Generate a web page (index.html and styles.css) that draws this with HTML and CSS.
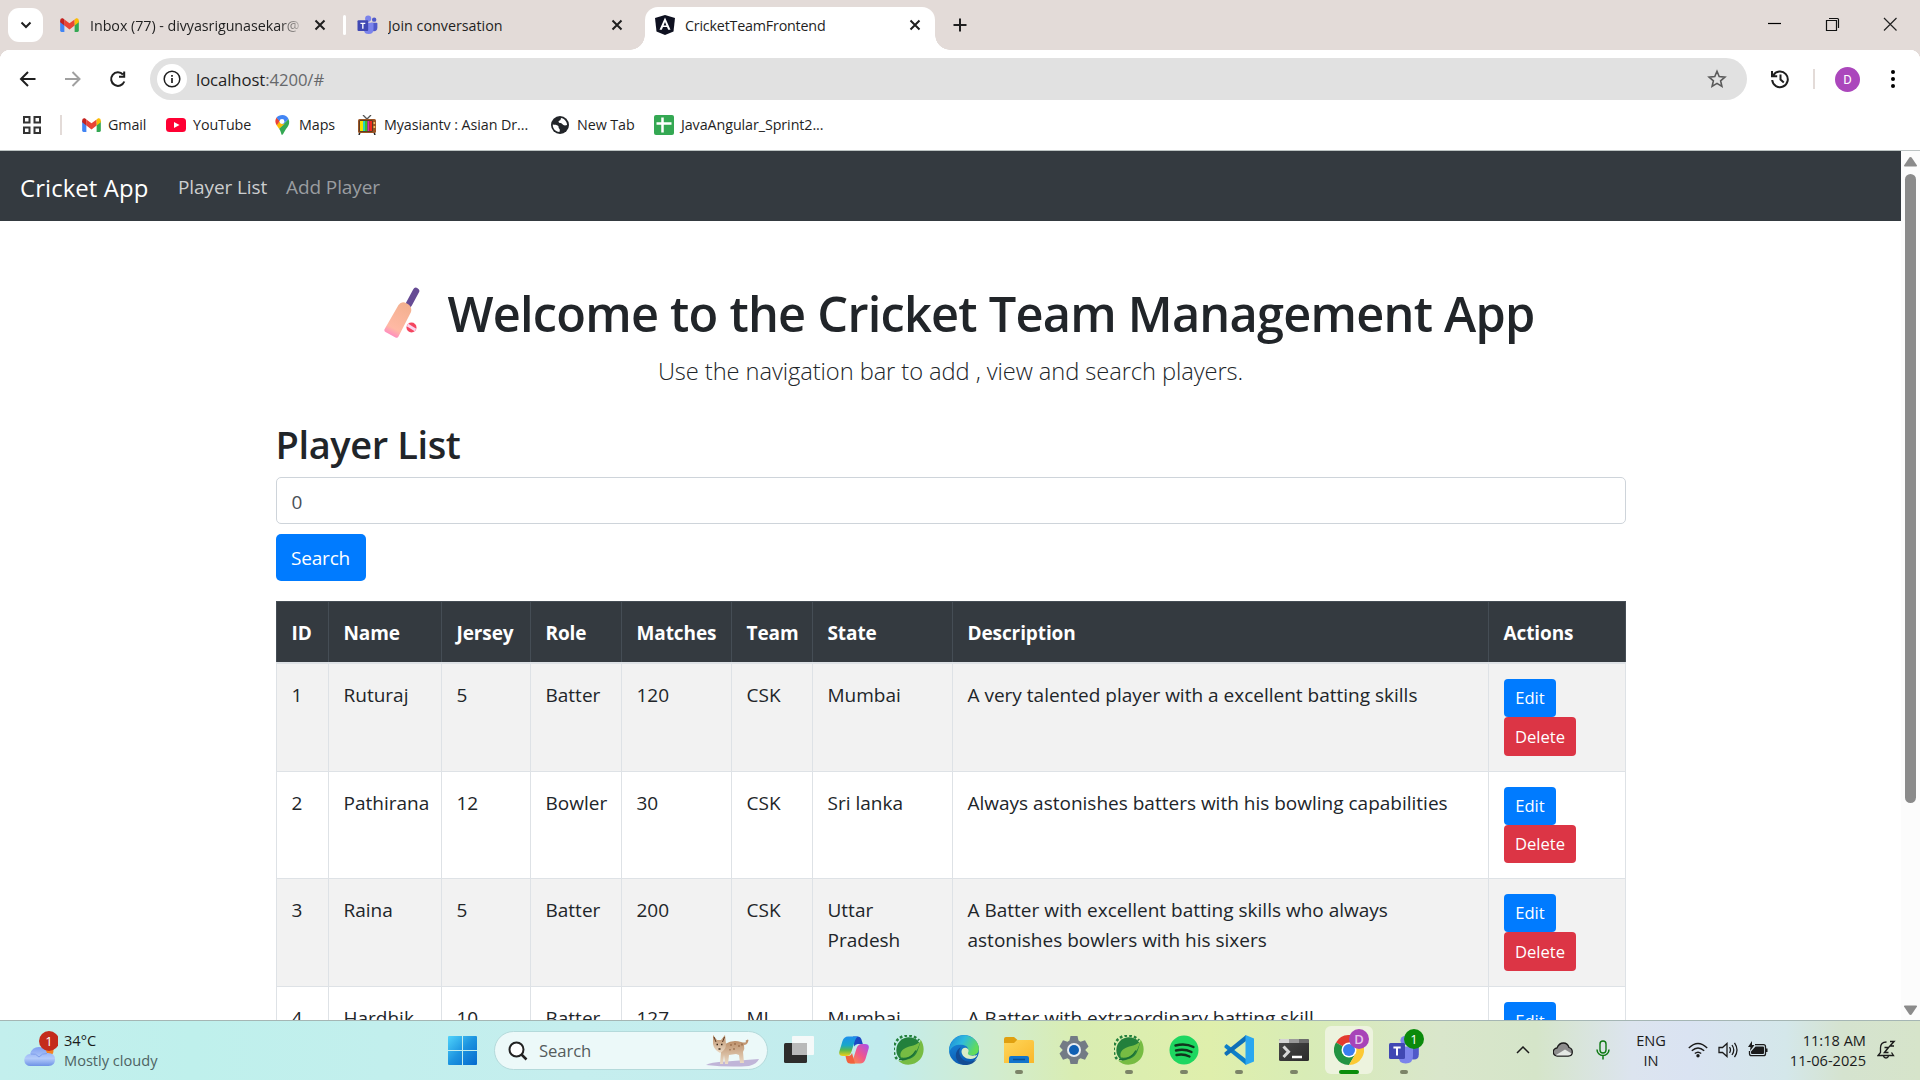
FILE: index.html
```html
<!DOCTYPE html>
<html lang="en">
<head>
<meta charset="utf-8">
<title>CricketTeamFrontend</title>
<link rel="stylesheet" href="styles.css">
</head>
<body>
<svg class="defs" width="0" height="0">
  <defs>
    <linearGradient id="gWin" x1="0" y1="0" x2="1" y2="1"><stop offset="0" stop-color="#4fd3fb"/><stop offset=".5" stop-color="#1c93df"/><stop offset="1" stop-color="#0469ce"/></linearGradient>
    <linearGradient id="gCloud" x1="0" y1="0" x2="0" y2="1"><stop offset="0" stop-color="#7f9ff0"/><stop offset=".6" stop-color="#b3cbfa"/><stop offset="1" stop-color="#6d92e6"/></linearGradient>
    <linearGradient id="gCopA" x1="0" y1="0" x2="0" y2="1"><stop offset="0" stop-color="#1d8fee"/><stop offset=".45" stop-color="#18a7c9"/><stop offset=".7" stop-color="#58b84e"/><stop offset="1" stop-color="#f2cf16"/></linearGradient>
    <linearGradient id="gCopB" x1="1" y1="0" x2="0" y2="1"><stop offset="0" stop-color="#a64ff0"/><stop offset=".5" stop-color="#f0568c"/><stop offset="1" stop-color="#fc9a3a"/></linearGradient>
    <linearGradient id="gEdgeA" x1="0" y1="0" x2="1" y2=".4"><stop offset="0" stop-color="#1b86d8"/><stop offset=".5" stop-color="#2ebadd"/><stop offset="1" stop-color="#62dc5a"/></linearGradient>
    <linearGradient id="gEdgeB" x1="0" y1="0" x2=".3" y2="1"><stop offset="0" stop-color="#1b8fe0"/><stop offset="1" stop-color="#0b5cb4"/></linearGradient>
    <linearGradient id="gFolder" x1="0" y1="0" x2="1" y2="1"><stop offset="0" stop-color="#ffd65a"/><stop offset="1" stop-color="#f9b72a"/></linearGradient>
    <linearGradient id="gTerm" x1="0" y1="0" x2="1" y2="1"><stop offset="0" stop-color="#4a4a4a"/><stop offset="1" stop-color="#2b2b2b"/></linearGradient>
    <linearGradient id="gBat" x1=".7" y1="0" x2=".3" y2="1"><stop offset="0" stop-color="#f3b08f"/><stop offset=".75" stop-color="#ffb9a4"/><stop offset="1" stop-color="#ff84c4"/></linearGradient>
    <linearGradient id="gLynx" x1="0" y1="0" x2="0" y2="1"><stop offset="0" stop-color="#b98a63"/><stop offset="1" stop-color="#ecdcc8"/></linearGradient>

    <symbol id="gmail" viewBox="0 0 20 15"><path fill="#4285f4" d="M0 3v10.500Q0 15 1.400 15H4.500V5z"/><path fill="#34a853" d="M15.500 15h3.100q1.400 0 1.400-1.500V3l-4.500 2z"/><path fill="#ea4335" d="M4.500 8V1.500L10 5.700l5.500-4.200V8L10 12.200z"/><path fill="#fbbc04" d="M15.500 1.500V8L20 4.600V3c0-2.700-2.300-3.300-3.600-2.200z"/><path fill="#c5221f" d="M4.500 1.500V8L0 4.600V3C0 .3 2.300-.3 3.600.8z"/></symbol>
    <symbol id="teams" viewBox="0 0 30 30"><circle cx="16" cy="5.500" r="4.600" fill="#7b83eb"/><circle cx="25" cy="7" r="3.300" fill="#5059c9"/><path fill="#5059c9" d="M20 11.500h8.500q1.300 0 1.300 1.300v6.500q0 5.200-5 5.200-4 0-5-4z"/><path fill="#7b83eb" d="M9.500 11.500h13.300q1.200 0 1.200 1.200v8.500q0 7.300-7.300 7.300-7.200 0-7.200-7.300z"/><rect x="0" y="8" width="16" height="16" rx="1.500" fill="#4048b3"/><path d="M4.400 12.500h7.300M8 12.500v8" stroke="#fff" stroke-width="2" fill="none"/></symbol>
    <symbol id="x" viewBox="0 0 12 12"><path d="M1.500 1.500l9 9M10.500 1.500l-9 9" stroke="#1f1f1f" stroke-width="2" fill="none"/></symbol>
    <symbol id="spring" viewBox="0 0 30 30"><circle cx="15" cy="15" r="12.700" fill="#23803c"/><path d="M3 24A13.700 13.700 0 0 1 25 5.500" fill="none" stroke="#23803c" stroke-width="2.600" stroke-dasharray="2.700 2.100"/><path fill="#77bc43" d="M26.500 4.500C31 11 30.500 19 26 24.500 20 31 10 31.500 4 25.500c5 1 8-.5 12.500-2C23 21 25 13 26.500 4.500z"/><path fill="#77bc43" d="M26 6C23 11 16 10.500 11.500 13c-5 2.500-6 6.500-4.500 9.500C15 23.500 24 19.500 26 6z"/><path d="M5 24.500c8 .5 14-3.500 17-9" stroke="#1b6e35" stroke-width="1.300" fill="none"/></symbol>
  </defs>
</svg>

<header class="tabstrip">
  <button class="tab-menu"><svg width="12" height="8" viewBox="0 0 12 8"><path d="M1.500 1.500L6 6l4.500-4.500" fill="none" stroke="#1f1f1f" stroke-width="2"/></svg></button>
  <div class="tab tab-inbox"><svg width="19" height="14"><use href="#gmail"/></svg><span class="tab-title fade">Inbox (77) - divyasrigunasekar@</span><svg class="close" width="12" height="12"><use href="#x"/></svg></div>
  <i class="tab-sep"></i>
  <div class="tab tab-join"><svg width="21" height="20"><use href="#teams"/></svg><span class="tab-title">Join conversation</span><svg class="close" width="12" height="12"><use href="#x"/></svg></div>
  <div class="tab tab-active"><svg width="20" height="20" viewBox="0 0 20 20"><path fill="#0e1120" d="M10 0l10 3-1.500 13.500L10 20l-8.500-3.500L0 3z"/><path fill="#fff" fill-rule="evenodd" d="M10 2.500l5.500 12.300h-2.300L12 12H8l-1.200 2.800H4.500zM10 7l-1.400 3.400h2.800z"/></svg><span class="tab-title">CricketTeamFrontend</span><svg class="close" width="12" height="12"><use href="#x"/></svg></div>
  <svg class="plus" width="14" height="14" viewBox="0 0 14 14"><path d="M7 .5v13M.5 7h13" stroke="#1f1f1f" stroke-width="2"/></svg>
  <div class="winbtns">
    <svg width="58" height="40" viewBox="0 0 58 40"><path d="M22 20.500h13" stroke="#000" stroke-width="1.200"/></svg>
    <svg width="58" height="40" viewBox="0 0 58 40"><path d="M22.500 17.500h10v10h-10zM25 15.500h8.500q1 0 1 1V25" fill="none" stroke="#111" stroke-width="1.200"/></svg>
    <svg width="58" height="40" viewBox="0 0 58 40"><path d="M22 15l12.500 12.500M34.500 15L22 27.500" fill="none" stroke="#222" stroke-width="1.200"/></svg>
  </div>
</header>

<section class="chrome-bars">
  <div class="toolbar">
    <svg class="nav-ic" width="45" height="30" viewBox="0 0 45 30"><path d="M35.500 15H21M28 8l-7 7 7 7" fill="none" stroke="#1f1f1f" stroke-width="2"/></svg>
    <svg class="nav-ic" width="45" height="30" viewBox="0 0 45 30"><path d="M20 15h14.500M27.500 8l7 7-7 7" fill="none" stroke="#a0a0a0" stroke-width="2"/></svg>
    <svg class="nav-ic" width="45" height="30" viewBox="0 0 45 30"><path d="M34.300 17.500A6.800 6.800 0 1 1 33 10.500M34.200 7.500v5.200h-5.200" fill="none" stroke="#1f1f1f" stroke-width="2"/></svg>
    <div class="omnibox">
      <span class="info"><svg width="18" height="18" viewBox="0 0 18 18"><circle cx="9" cy="9" r="7.800" fill="none" stroke="#1f1f1f" stroke-width="1.500"/><path d="M9 8v5M9 5v1.800" stroke="#1f1f1f" stroke-width="1.700"/></svg></span>
      <span class="url">localhost<span class="port">:4200/#</span></span>
      <svg class="star" width="20" height="20" viewBox="0 0 20 20"><path d="M10 2.300l2.200 5.300 5.700.5-4.300 3.700 1.300 5.600-4.900-3-4.900 3 1.300-5.600-4.300-3.700 5.700-.5z" fill="none" stroke="#5a5a5a" stroke-width="1.600"/></svg>
    </div>
    <svg class="history" width="20" height="20" viewBox="0 0 20 20"><path d="M3.200 6.500A7.800 7.800 0 1 1 2.200 11M2 2v5.200h5.200M10.500 5.500v5l3.300 3" fill="none" stroke="#1f1f1f" stroke-width="2"/></svg>
    <i class="bar-sep"></i>
    <span class="avatar">D</span>
    <svg class="dots" width="6" height="20" viewBox="0 0 6 20"><circle cx="3" cy="3" r="2"/><circle cx="3" cy="10" r="2"/><circle cx="3" cy="17" r="2"/></svg>
  </div>
  <nav class="bookmarks">
    <svg class="apps" width="18" height="18" viewBox="0 0 18 18"><path d="M1 1h5.500v5.500H1zM11.500 1H17v5.500h-5.500zM1 11.500h5.500V17H1zM11.500 11.500H17V17h-5.500z" fill="none" stroke="#333" stroke-width="2"/></svg>
    <i class="bm-sep"></i>
    <a class="bm bm-gmail"><svg width="20" height="20" viewBox="0 0 20 20"><use href="#gmail" x="1" y="3" width="19" height="14"/></svg><span>Gmail</span></a>
    <a class="bm bm-youtube"><svg width="20" height="20" viewBox="0 0 20 20"><rect y="3" width="20" height="14" rx="3.500" fill="#ff0033"/><path d="M8 7l5.500 3L8 13z" fill="#fff"/></svg><span>YouTube</span></a>
    <a class="bm bm-maps"><svg width="20" height="20" viewBox="0 0 20 20"><path fill="#34a853" d="M10 20c-.8 0-.8-3.500-3-6.200L16.500 4c1.500 3.500.5 6-1.500 8.800-3 3.700-3.800 7.200-5 7.200z"/><path fill="#fbbc04" d="M7 13.800L4.500 10l3-3.500L12.500 9z"/><path fill="#ea4335" d="M4.700 10.300C2.600 7 3.300 4.300 4.700 2.500L8 6z"/><path fill="#4285f4" d="M4.500 2.700C7-.7 14.500-1.200 16.500 4L11 9.500 7.500 6z"/><circle cx="10" cy="6.500" r="2.400" fill="#fff"/></svg><span>Maps</span></a>
    <a class="bm bm-tv"><svg width="20" height="20" viewBox="0 0 20 20"><path d="M6 0l4 4 4-4" fill="none" stroke="#555" stroke-width="1.300"/><path d="M3 17l-1 3M17 17l1 3" stroke="#222" stroke-width="1.500"/><rect x="1" y="4" width="18" height="14" rx="1.500" fill="#9a5526"/><rect x="2.500" y="5.500" width="13" height="11" fill="#222"/><path fill="#f3e000" d="M3 6h3v10H3z"/><path fill="#25d3c4" d="M6 6h2v10H6z"/><path fill="#3abf2b" d="M8 6h2.500v10H8z"/><path fill="#d92fb0" d="M10.500 6h2v10h-2z"/><path fill="#ef2c20" d="M12.500 6H15v10h-2.500z"/><circle cx="17.300" cy="8" r="1" fill="#fc6"/><circle cx="17.300" cy="12" r="1" fill="#fc6"/></svg><span>Myasiantv : Asian Dr...</span></a>
    <a class="bm bm-new"><svg width="20" height="20" viewBox="0 0 20 20"><circle cx="10" cy="10" r="9" fill="#222529"/><path fill="#fff" d="M2.800 9.500c2 .3 4 .2 5.200 1.200 1.200 1 0 2.100 1.300 3 1 .7.400 2.200.1 3.300C5.500 16.800 2.500 13.500 2.800 9.500zM11 3c-.5 1.500 0 2-1.800 2.800-1.500.7-.2 2.300 1.200 2.200 1.500-.1 1.500 1.200 3 2 1.200.700 2.300.4 3.700.1-.1-3.600-2.700-6.500-6.100-7.100z"/></svg><span>New Tab</span></a>
    <a class="bm bm-java"><svg width="20" height="20" viewBox="0 0 20 20"><rect width="20" height="20" rx="2" fill="#34a853"/><path d="M8.500 2.500v15M2.500 8.500h15" stroke="#fff" stroke-width="2.500"/></svg><span>JavaAngular_Sprint2...</span></a>
  </nav>
</section>

<div class="viewport">
  <div class="page">
    <nav class="navbar"><a class="brand">Cricket App</a><a class="link active">Player List</a><a class="link">Add Player</a></nav>
    <main class="container">
      <h1><svg class="bat" width="37" height="52" viewBox="0 0 37 52"><path d="M32 4L25 17" stroke="#664b94" stroke-width="6.500" stroke-linecap="round"/><path d="M14.500 18q3-4.500 8-1.800 6 3 4.500 8.800L14.500 49.500q-1 2-3 1L1.500 45q-1.800-1.200-.8-3z" fill="url(#gBat)"/><circle cx="27.500" cy="40.500" r="5" fill="#f4455f"/><path d="M23.500 38l8 5" stroke="#fbd3ee" stroke-width="3"/></svg><span>Welcome to the Cricket Team Management App</span></h1>
      <p class="lead">Use the navigation bar to add , view and search players.</p>
      <h2>Player List</h2>
      <div class="field">0</div>
      <button class="btn search-btn">Search</button>
      <table>
        <colgroup><col class="c1"><col class="c2"><col class="c3"><col class="c4"><col class="c5"><col class="c6"><col class="c7"><col class="c8"><col class="c9"></colgroup>
        <thead><tr><th>ID</th><th>Name</th><th>Jersey</th><th>Role</th><th>Matches</th><th>Team</th><th>State</th><th>Description</th><th>Actions</th></tr></thead>
        <tbody>
          <tr><td>1</td><td>Ruturaj</td><td>5</td><td>Batter</td><td>120</td><td>CSK</td><td>Mumbai</td><td>A very talented player with a excellent batting skills</td><td class="actions"><button class="btn sm">Edit</button><button class="btn sm danger">Delete</button></td></tr>
          <tr class="short"><td>2</td><td>Pathirana</td><td>12</td><td>Bowler</td><td>30</td><td>CSK</td><td>Sri lanka</td><td>Always astonishes batters with his bowling capabilities</td><td class="actions"><button class="btn sm">Edit</button><button class="btn sm danger">Delete</button></td></tr>
          <tr><td>3</td><td>Raina</td><td>5</td><td>Batter</td><td>200</td><td>CSK</td><td>Uttar<br>Pradesh</td><td>A Batter with excellent batting skills who always<br>astonishes bowlers with his sixers</td><td class="actions"><button class="btn sm">Edit</button><button class="btn sm danger">Delete</button></td></tr>
          <tr><td>4</td><td>Hardhik</td><td>10</td><td>Batter</td><td>127</td><td>MI</td><td>Mumbai</td><td>A Batter with extraordinary batting skill</td><td class="actions"><button class="btn sm">Edit</button><button class="btn sm danger">Delete</button></td></tr>
        </tbody>
      </table>
    </main>
  </div>
  <aside class="scrollbar">
    <svg width="13" height="10" viewBox="0 0 13 10"><path d="M6.500 0q.8 0 1.300.7L13 8.500q0 1-.8 1H.8q-.8 0-.8-1L5.200.7Q5.700 0 6.500 0z" fill="#8b8b8b"/></svg>
    <i class="thumb"></i>
    <svg width="13" height="10" viewBox="0 0 13 10"><path d="M6.500 10q.8 0 1.300-.7L13 1.500q0-1-.8-1H.8q-.8 0-.8 1l5.200 7.800q.5.700 1.300.7z" fill="#8b8b8b"/></svg>
  </aside>
</div>

<footer class="taskbar">
  <div class="weather">
    <svg width="34" height="40" viewBox="0 0 34 40"><circle cx="23" cy="21" r="6.500" fill="#f58220"/><path d="M6.500 36a6 6 0 0 1-.5-12Q8 17 15 17q6.500 0 8 6 8-.500 8 6.500 0 6.500-6.500 6.500z" fill="url(#gCloud)"/><path d="M7 24q5-1 8 3 3-4 8-3.500" stroke="#7f9fec" stroke-width="1" fill="none"/><circle cx="25" cy="11" r="10" fill="#c42b1c"/></svg>
    <b class="weather-badge">1</b>
    <div class="weather-text"><span class="temp">34°C</span><span class="cond">Mostly cloudy</span></div>
  </div>
  <svg class="start" width="29" height="29" viewBox="0 0 29 29"><path fill="url(#gWin)" d="M1 0h13v14H0V1q0-1 1-1zM15 0h13q1 0 1 1v13H15zM0 15h14v14H1q-1 0-1-1zM15 15h14v13q0 1-1 1H15z"/></svg>
  <div class="search">
    <svg width="20" height="20" viewBox="0 0 20 20"><circle cx="8.500" cy="8.500" r="7" fill="#fff" stroke="#222" stroke-width="2"/><path d="M13.500 13.500l5 5" stroke="#222" stroke-width="2.500"/></svg>
    <span>Search</span>
    <svg class="lynx" width="56" height="34" viewBox="0 0 56 34"><path fill="#b9a9d2" opacity=".85" d="M1 31q4-3 20-3.500L54 25q-2 5-10 7-20 1.500-43-1z"/><path fill="url(#gLynx)" d="M20 10q8-5 16-2 4 1 5 0-1-2 1-2 .500-1 1.500 0l-.500 2q-1 3-4 3 1 4-1 7l1 11h-4l-1-8-3-1-7 1-1 9h-3l-1-9-1 9h-3l1-12q-3-3-3-7z"/><path fill="url(#gLynx)" d="M8 1l4 5h4l4-5 1 9q0 6-6 9-6-3-7-9z"/><path d="M9 3l2 5M19.500 3l-2 5" stroke="#5d3b27" stroke-width="1"/><path d="M11.500 10.500h1.500M16 10.500h1.500M13.500 15h2" stroke="#3b2a1c" stroke-width="1.500"/><path d="M26 10v2M30 9v2M34 11v2M29 14v2M25 15v1.500M37 9.500v2" stroke="#8a5c3b" stroke-width="1"/></svg>
  </div>
  <div class="apps-row">
    <div class="app"><svg width="30" height="30" viewBox="0 0 30 30"><rect x="0" y="8" width="23" height="20" rx="1.500" fill="#2e2d2c"/><rect x="8" y="1" width="22" height="19" rx="1" fill="#fafafa" opacity=".92"/><path fill="#b9b9b9" d="M8 8h15v12H8z"/></svg></div>
    <div class="app"><svg width="30" height="30" viewBox="0 0 30 30"><path fill="#1b48c4" d="M14 1.500h5q2.500 0 3.300 2.500l1.500 5h-5q-2.500 0-3.500 2.500z"/><path fill="url(#gCopA)" d="M9 1.500h10q-2 1-3 4l-3.500 11q-1.500 4.500-5 4.500H4q-5 0-3.500-5l3-10q1.500-4.500 5.500-4.500z"/><path fill="url(#gCopB)" d="M21 28.500H11q2-1 3-4l3.500-11q1.500-4.500 5-4.500H26q5 0 3.500 5l-3 10q-1.500 4.500-5.500 4.500z"/><path fill="#f2623e" d="M16 28.500h-5q-2.500 0-3.300-2.500l-1.200-5h2.500q3 0 4-3z"/></svg></div>
    <div class="app"><svg width="30" height="30"><use href="#spring"/></svg></div>
    <div class="app"><svg width="30" height="30" viewBox="0 0 30 30"><circle cx="15" cy="15" r="15" fill="url(#gEdgeB)"/><path fill="url(#gEdgeA)" d="M1.500 10C5 1 14-2 22 2c6 3 8.500 9 7.800 13-.8 4.500-5 6-9 5.500-3-.5-3-2-2-3.500 1.500-2.500-.5-6.500-4.300-7C9 9 3 10 .2 17 0 14 .5 12 1.500 10z"/><path fill="#134c94" d="M12 12c-3 4-2 9 2 12.500 4 3 9 3 14-.5-5 7-13 7.500-18 3.500-5-4.500-4-12 2-15.500z"/><path fill="#d9ecc7" d="M19.500 16.500c-1.500 2.500 0 4 4 4.200 2.300 0 3.800-.400 5-1.200-1 3-4 4.500-7 4.500-5 0-9-3.500-9-7.500 0-3 3-4.500 5-3.500 2 .8 2.500 2.500 2 3.500z"/></svg></div>
    <div class="app run"><svg width="30" height="30" viewBox="0 0 30 30"><path fill="#e0a010" d="M0 4q0-2 2-2h8l3.500 3H28v5H0z"/><path fill="url(#gFolder)" d="M0 8h10l3-3h15q2 0 2 2v21H0z"/><path fill="#1275cc" d="M5 28v-5q0-2 2-2h16q2 0 2 2v5z"/><path d="M9 24.500h12" stroke="#0c4f91" stroke-width="1.500"/></svg></div>
    <div class="app"><svg width="30" height="30" viewBox="0 0 30 30"><path fill="#737b85" d="M11.500 1h7l1 4.500 2 1.200 4.500-1.400 3.500 6.200-3.300 3.500 3.300 3.500-3.500 6.200-4.500-1.400-2 1.200-1 4.500h-7l-1-4.500-2-1.200L4 24.700.5 18.500 3.800 15 .5 11.500 4 5.300l4.500 1.400 2-1.200z"/><circle cx="15" cy="15" r="7" fill="#e8edf2"/><circle cx="15" cy="15" r="5" fill="#0f5fb3"/></svg></div>
    <div class="app run"><svg width="30" height="30"><use href="#spring"/></svg></div>
    <div class="app run"><svg width="30" height="30" viewBox="0 0 30 30"><circle cx="15" cy="15" r="14.500" fill="#1ed760"/><path d="M6.500 10.500q10-2.500 18 1.500M7 15.500q8.500-2 15.500 1.500M7.500 20q7-1.500 13 1.500" fill="none" stroke="#10351c" stroke-width="2.400" stroke-linecap="round"/></svg></div>
    <div class="app run"><svg width="30" height="30" viewBox="0 0 30 30"><path fill="#0d7fc9" d="M.5 11l2-2L22 24v6L.5 12.500z"/><path fill="#0e6fb8" d="M.5 19l2 2L22 6V0L.5 17.500z"/><path fill="#2aa7f0" d="M21.500 0L30 3.500v23L21.500 30z"/></svg></div>
    <div class="app run"><svg width="30" height="30" viewBox="0 0 30 30"><rect y="4" width="30" height="22" rx="1.500" fill="url(#gTerm)"/><path fill="#d4d4d4" d="M0 8V5.500Q0 4 1.500 4H10v4z"/><path fill="#9a9a9a" d="M10 4h10v4H10z"/><path fill="#6c6c6c" d="M20 4h8.500Q30 4 30 5.500V8H20z"/><path d="M4.500 11.500l5 5.300-5 5.200" fill="none" stroke="#d8d8d8" stroke-width="3"/><path d="M13 22h10" stroke="#fff" stroke-width="2.500"/></svg></div>
    <div class="app run current"><svg width="30" height="30" viewBox="0 0 30 30"><path fill="#e33b2e" d="M15 15L2 7.500A15 15 0 0 1 28 7.500H15z"/><path fill="#229342" d="M15 15l6.500 3.700L15 30A15 15 0 0 1 2 7.500z"/><path fill="#fcc934" d="M15 7.500h13A15 15 0 0 1 15 30l6.500-11.300z"/><circle cx="15" cy="15" r="7.500" fill="#fff"/><circle cx="15" cy="15" r="6" fill="#3a7df0"/></svg><b class="badge purple">D</b></div>
    <div class="app run"><svg width="30" height="30"><use href="#teams"/></svg><b class="badge green">1</b></div>
  </div>
  <div class="tray">
    <svg class="chev" width="14" height="8" viewBox="0 0 14 8"><path d="M1 7l6-6 6 6" fill="none" stroke="#1b1b1b" stroke-width="1.500"/></svg>
    <svg class="cloud" width="20" height="15" viewBox="0 0 20 15"><path d="M4.500 14A4 4 0 0 1 4 6Q6 1 10.500 1 14.500 1 16 5.500q3.300 1 3.300 4.500 0 4-4 4z" fill="#8d8d8d" stroke="#1b1b1b" stroke-width="1.300"/><path fill="#e4e8e4" d="M3 13l9-5.500 6.500 4q-1 2-3.500 2H5q-1.500 0-2-.5z"/></svg>
    <svg class="mic" width="14" height="20" viewBox="0 0 14 20"><rect x="4" y="1" width="6" height="12" rx="3" fill="none" stroke="#0f7a14" stroke-width="1.400"/><path d="M1 9.500a6 6 0 0 0 12 0M7 15.500V19.500" fill="none" stroke="#0f7a14" stroke-width="1.500"/></svg>
    <div class="lang"><span>ENG</span><span>IN</span></div>
    <svg class="wifi" width="20" height="16" viewBox="0 0 20 16"><path d="M.8 6Q10-3 19.200 6M3.800 8.800q6.200-5.500 12.400 0M6.800 11.500q3.200-2.700 6.400 0" fill="none" stroke="#1b1b1b" stroke-width="1.400"/><circle cx="10" cy="13.800" r="1.700" fill="#1b1b1b"/></svg>
    <svg class="vol" width="20" height="18" viewBox="0 0 20 18"><path d="M1 6.500h3.500L9 2.500v13L4.500 11.500H1z" fill="none" stroke="#1b1b1b" stroke-width="1.300"/><path d="M11.500 6.200q2 2.800 0 5.600M14 4q3.500 5 0 10M16.500 1.800q5 7.200 0 14.400" fill="none" stroke="#1b1b1b" stroke-width="1.300"/></svg>
    <svg class="batt" width="20" height="17" viewBox="0 0 20 17"><path d="M7 3.700h8.500q2 0 2 2v7q0 2-2 2h-12q-2 0-2-2V10" fill="none" stroke="#1b1b1b" stroke-width="1.300"/><path fill="#1b1b1b" d="M7.500 5.500H15q1 0 1 1V12q0 1-1 1H4q-1 0-1-1v-1.500zM18 7.500h1.500v3.500H18zM4 0l-4 6h2.500L2 10l4.500-6H4z"/></svg>
    <div class="clock"><span>11:18 AM</span><span>11-06-2025</span></div>
    <svg class="bell" width="19" height="19" viewBox="0 0 19 19"><path d="M9.500 2Q3.500 2 3.500 8v4.500L1 15.500h15.500l-2-3M6.500 16q.5 2 2.500 2t2.500-2" fill="none" stroke="#1b1b1b" stroke-width="1.300"/><path d="M7.500 7.500h4L7.500 12.500h4M13 1.500h4L13 6h4" fill="none" stroke="#1b1b1b" stroke-width="1.500"/></svg>
  </div>
</footer>
</body>
</html>
```
FILE: styles.css
```css
* { box-sizing: border-box; }
body { margin: 0; width: 1920px; height: 1080px; overflow: hidden; display: flex; flex-direction: column; background: #fff; color: #212529; font-family: "Open Sans", "Noto Sans", sans-serif; }
svg { display: block; flex: none; }
.defs { position: absolute; }
button { border: 0; padding: 0; font: inherit; }
span, a { white-space: nowrap; }

.tabstrip { height: 50px; flex: none; background: #e3dbd8; display: flex; align-items: center; padding-left: 8px; font-size: 14.3px; color: #1f1f1f; }
.tab-menu { width: 35px; height: 34px; border-radius: 11px; background: #fff; display: flex; align-items: center; justify-content: center; }
.tab { display: flex; align-items: center; height: 43px; }
.tab-title { flex: 1; margin-left: 10px; overflow: hidden; }
.tab-inbox { width: 283px; margin-left: 17px; }
.tab-inbox .tab-title { flex: none; width: 210px; margin-left: 11px; letter-spacing: -.05px; }
.tab-inbox .close { margin-left: 14px; }
.fade { -webkit-mask-image: linear-gradient(90deg, #000 90%, rgba(0,0,0,.2)); mask-image: linear-gradient(90deg, #000 90%, rgba(0,0,0,.2)); }
.tab-sep { width: 3px; height: 20px; background: #fff; border-radius: 2px; }
.tab-join { width: 266px; margin-left: 11px; }
.tab-active { width: 290px; height: 43px; align-self: flex-end; margin-left: 22px; padding: 0 14px 7px 10px; background: #fff; border-radius: 13px 13px 0 0; position: relative; }
.tab-active .tab-title { letter-spacing: -.2px; }
.tab-active::before, .tab-active::after { content: ""; position: absolute; bottom: 0; width: 15px; height: 15px; }
.tab-active::before { left: -15px; background: radial-gradient(circle at 0 0, transparent 14.5px, #fff 15px); }
.tab-active::after { right: -15px; background: radial-gradient(circle at 100% 0, transparent 14.5px, #fff 15px); }
.plus { margin-left: 18px; }
.winbtns { margin-left: auto; display: flex; align-self: flex-start; margin-top: 3px; }

.chrome-bars { height: 101px; flex: none; background: radial-gradient(circle at 10px 10px, #fff 10px, #e3dbd8 10.5px) 0 0 / 10px 10px no-repeat, radial-gradient(circle at 0 10px, #fff 10px, #e3dbd8 10.5px) 100% 0 / 10px 10px no-repeat, #fff; border-bottom: 1px solid #bcc3c3; }
.toolbar { height: 50px; padding-top: 8px; display: flex; align-items: center; }
.nav-ic:nth-child(3) { margin-right: 15px; }
.omnibox { width: 1597px; height: 42px; border-radius: 21px; background: #e1e1e1; display: flex; align-items: center; padding: 0 20px 0 7px; }
.info { width: 30px; height: 30px; border-radius: 50%; background: #fff; display: flex; align-items: center; justify-content: center; }
.url { margin-left: 9px; font-size: 16.7px; letter-spacing: -.08px; color: #1f1f1f; flex: 1; }
.port { color: #66686b; }
.history { margin-left: 23px; }
.bar-sep { width: 2px; height: 20px; background: #e3dbd8; margin: 0 20px 0 23px; }
.avatar { width: 25px; height: 25px; border-radius: 50%; background: #ab47bc; color: #fff; font: 13px/25px Roboto, sans-serif; text-align: center; }
.dots { margin-left: 30px; }
.bookmarks { height: 50px; display: flex; align-items: center; padding-left: 23px; font-size: 14.3px; letter-spacing: -.08px; color: #1f1f1f; }
.bm-sep { width: 2px; height: 20px; margin: 0 19px 0 19px; background: #e3dbd8; }
.bm { display: flex; align-items: center; gap: 7px; }
.bm span { padding-bottom: 1px; }
.bm-gmail { width: 85px; }
.bm-youtube { width: 106px; }
.bm-maps { width: 85px; }
.bm-tv { width: 193px; }
.bm-new { width: 104px; }

.viewport { height: 869px; flex: none; display: flex; overflow: hidden; }
.page { width: 1901px; }
.navbar { height: 70px; background: #343a40; display: flex; align-items: center; padding: 2px 20px 0; }
.brand { width: 158px; font-size: 23.9px; letter-spacing: .1px; color: #fff; }
.link { width: 108px; font-size: 19px; letter-spacing: -.1px; color: #9a9da0; }
.link.active { color: #cccecf; }
.container { width: 1350px; margin: 0 auto; padding-top: 60px; }
h1 { margin: 0; height: 60px; display: flex; align-items: center; padding: 4px 0 0 108px; gap: 27px; font-size: 48.7px; letter-spacing: -.76px; font-weight: 600; line-height: 60px; }
.lead { margin: 10px 0 0; height: 38px; padding-top: 1px; font-size: 23.7px; letter-spacing: -.08px; line-height: 38px; font-weight: 300; text-align: center; }
h2 { margin: 31px 0 9px; font-size: 38px; letter-spacing: -.4px; font-weight: 600; line-height: 48px; }
.field { height: 47px; border: 1px solid #ced4da; border-radius: 5px; padding: 1px 15px 0; line-height: 46px; font-size: 19px; color: #495057; }
.btn { display: block; background: #007bff; color: #fff; border-radius: 5px; text-align: center; }
.search-btn { margin: 10px 0 20px; width: 90px; height: 47px; padding-top: 2px; font-size: 19px; letter-spacing: -.2px; line-height: 45px; }
table { width: 1349px; table-layout: fixed; border-collapse: collapse; font-size: 19px; line-height: 30px; }
.c1 { width: 52px; } .c2 { width: 113px; } .c3 { width: 89px; } .c4 { width: 91px; } .c5 { width: 110px; } .c6 { width: 81px; } .c7 { width: 140px; } .c8 { width: 536px; } .c9 { width: 137px; }
th, td { border: 1px solid #dee2e6; padding: 16px 15px 14px; text-align: left; vertical-align: top; white-space: nowrap; }
th { background: #343a40; color: #fff; border-color: #454d55; border-bottom: 2px solid #dee2e6; font-weight: 700; letter-spacing: -.1px; }
td.actions { padding: 15px; }
tbody tr { height: 108px; }
tbody tr.short { height: 107px; }
tbody tr:nth-child(odd) { background: #f2f2f2; }
.sm { width: 52px; height: 38px; padding-left: 1px; font-size: 16.6px; line-height: 38px; border-radius: 4px; }
.danger { width: 72px; height: 39px; background: #dc3545; }
.short .danger { height: 38px; }
.scrollbar { width: 19px; background: #fcfcfc; display: flex; flex-direction: column; align-items: center; padding: 6px 0 5px; }
.thumb { width: 11px; height: 629px; margin: 7px 0 auto; border-radius: 6px; background: #8b8b8b; }

.taskbar { height: 60px; flex: none; border-top: 1px solid #a5b6b4; display: flex; align-items: center; background: linear-gradient(90deg, #c3efed 0, #bff0ec 10%, #c5eeee 30%, #c2eced 46%, #d2ecce 52%, #d9edb2 56%, #dfefac 63%, #d8ecb6 68%, #d9e6cb 75%, #d5e5c9 80%, #dce4ef 85%, #dae3f2 88%, #d4e7ea 93%, #d5e3cf 96%, #d6e4ca 100%); color: #1b1b1b; }
.weather { width: 448px; margin-top: -2px; padding-left: 24px; display: flex; position: relative; }
.weather-badge { position: absolute; left: 39px; top: 1px; width: 20px; line-height: 20px; text-align: center; color: #fff; font-size: 13px; font-weight: 400; }
.weather-text { margin-left: 6px; display: flex; flex-direction: column; font-size: 14.6px; line-height: 20px; }
.cond { color: #4e6363; }
.search { width: 274px; height: 39px; margin: 0 3px 0 17px; border-radius: 20px; background: #ecf9f9; border: 1px solid #b4dadb; display: flex; align-items: center; padding-left: 13px; font-size: 16.7px; letter-spacing: -.1px; color: #555c5c; }
.search span { margin-left: 11px; flex: 1; }
.lynx { margin-right: 6px; }
.apps-row { display: flex; margin-top: -1px; }
.app { width: 55px; height: 48px; display: flex; align-items: center; justify-content: center; position: relative; }
.run::after { content: ""; position: absolute; left: 23.5px; bottom: 0; width: 8px; height: 4px; border-radius: 2px; background: #7c8468; }
.current::before { content: ""; position: absolute; z-index: -1; inset: 0 3.5px; border-radius: 6px; background: #edf3de; }
.current { z-index: 0; }
.current::after { width: 20px; left: 17.5px; background: #0b8d0b; }
.badge { position: absolute; top: 3px; left: 28px; width: 20px; height: 20px; border-radius: 50%; color: #fff; font-size: 13px; font-weight: 400; line-height: 20px; text-align: center; }
.purple { background: #a743b8; color: #e6c5ec; font-weight: 600; }
.green { background: #0b8a0b; }
.tray { margin-left: auto; margin-top: -2px; display: flex; align-items: center; padding-right: 24px; font-size: 14.6px; line-height: 20px; }
.cloud { margin-left: 23px; }
.mic { margin-left: 23px; }
.lang { width: 30px; margin-left: 26px; display: flex; flex-direction: column; align-items: center; }
.wifi { margin-left: 22px; }
.vol { margin-left: 10px; }
.batt { margin-left: 10px; }
.clock { width: 80px; margin-left: 18px; display: flex; flex-direction: column; align-items: flex-end; }
.bell { margin-left: 11px; }
```
